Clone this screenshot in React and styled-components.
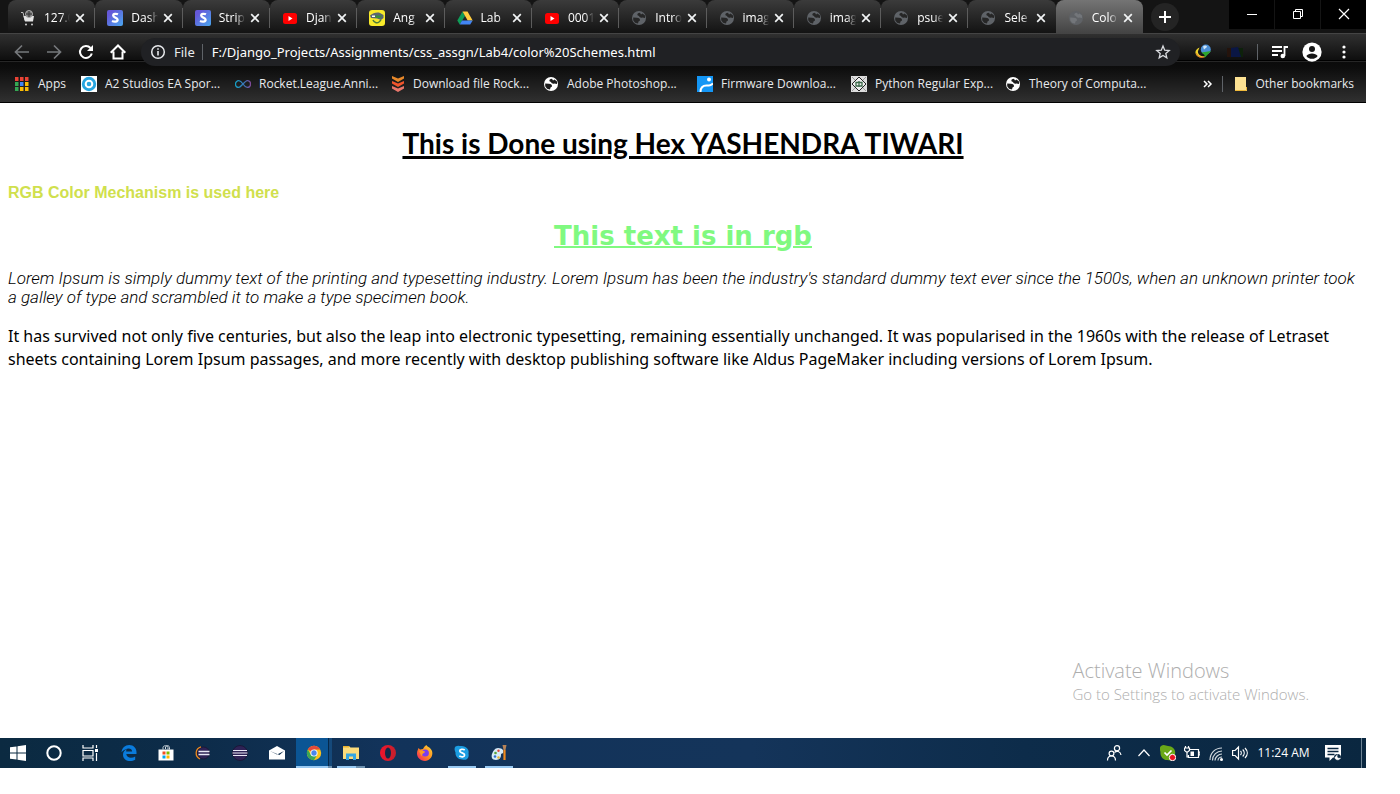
import React from 'react';
import styled, { createGlobalStyle, css } from 'styled-components';

const ui = '"Open Sans", "Noto Sans", sans-serif';

const GlobalStyle = createGlobalStyle`
  *, *::before, *::after { box-sizing: border-box; }
  body { margin: 0; background: #fff; font-family: ${ui}; }
  button, input { font: inherit; color: inherit; border: 0; padding: 0; background: none; }
  svg { display: block; flex: none; }
`;

const Desktop = styled.div`
  display: flex;
  flex-direction: column;
  min-height: 100vh;
  padding: 0 34px 26px 0;
`;

/* ---------- tab strip ---------- */
const TabStrip = styled.header`
  display: flex;
  height: 33px;
  padding-left: 8px;
  background: #141414;
  color: #fff;
`;
const Tabs = styled.div`
  display: flex;
  flex: 1;
  min-width: 0;
`;
const Tab = styled.div`
  position: relative;
  display: flex;
  flex: 1 1 0;
  min-width: 0;
  align-items: center;
  padding: 2px 7px 0 12px;
  border-radius: 8px 8px 0 0;
  background: linear-gradient(#3b3b3b, #131313);
  font-size: 12px;
  line-height: 16px;
  &:not(:last-child)::after {
    content: '';
    position: absolute;
    right: 0;
    top: 8px;
    width: 1px;
    height: 20px;
    background: #5c5c5c;
  }
  &:nth-last-child(2)::after { display: none; }
  ${(p) => p.$active && css`background: linear-gradient(#747474, #444);`}
`;
const TabTitle = styled.span`
  flex: 1;
  min-width: 0;
  margin: 0 2px 0 8px;
  overflow: hidden;
  white-space: nowrap;
  mask-image: linear-gradient(90deg, #000 65%, transparent);
`;
const TabClose = styled.button`
  display: grid;
  place-items: center;
  flex: none;
  width: 16px;
  height: 16px;
`;
const NewTab = styled.button`
  display: grid;
  place-items: center;
  width: 28px;
  height: 28px;
  margin: 3px 50px 0 8px;
  border-radius: 50%;
  background: #242424;
`;
const WindowButtons = styled.div`
  display: flex;
  gap: 1px;
  height: 29px;
  background: #141414;
`;
const WindowButton = styled.button`
  display: grid;
  place-items: center;
  width: 45px;
  background: #000;
`;

/* ---------- toolbar and bookmarks ---------- */
const Chrome = styled.div`
  border-top: 1px solid #444;
  border-bottom: 1px solid #000;
  background: linear-gradient(#303030 0, #0e0e0e 26px, #000 26px, #000 27px, #262626 27px, #262626 28px, #0b0b0b 28px, #0d0d0d 34px, #303030);
  color: #fff;
`;
const Toolbar = styled.div`
  display: flex;
  align-items: center;
  height: 36px;
  padding: 0 6px;
`;
const ToolButton = styled.button`
  display: grid;
  place-items: center;
  flex: none;
  width: 32px;
  height: 28px;
`;
const Omnibox = styled.div`
  display: flex;
  flex: 1;
  align-items: center;
  height: 28px;
  margin: 0 7px;
  padding: 0 9px;
  border-radius: 14px;
  background: #202124;
  font-family: "Noto Sans", sans-serif;
  font-size: 13px;
  line-height: 20px;
`;
const Scheme = styled.label`
  padding: 0 7px 0 8px;
  color: #e8eaed;
`;
const Rule = styled.span`
  flex: none;
  width: 1px;
  height: 16px;
  margin: ${(p) => p.$space || '0 6px'};
  background: #5f6368;
`;
const Address = styled.input`
  flex: 1;
  min-width: 0;
  margin-left: 9px;
  outline: 0;
`;
const StarButton = styled.button`
  display: grid;
  place-items: center;
  width: 16px;
  height: 20px;
`;
const Bookmarks = styled.nav`
  display: flex;
  align-items: center;
  height: 32px;
  padding: 0 12px 4px 14px;
  font-size: 12px;
  line-height: 16px;
`;
const Bookmark = styled.a`
  display: flex;
  flex: none;
  align-items: center;
  gap: ${(p) => p.$gap || '8px'};
  width: ${(p) => p.$width || '154px'};
  color: #e8eaed;
  text-decoration: none;
  white-space: nowrap;
`;
const More = styled.button`
  width: 12px;
  margin-left: auto;
  display: grid;
  place-items: center;
`;

/* ---------- document ---------- */
const Page = styled.main`
  position: relative;
  display: flex;
  flex: 1;
  flex-direction: column;
  gap: 18px;
  padding: 18px 8px;
  color: #000;
`;
const Title = styled.h1`
  margin: 0;
  font: bold 28px/44px Lato, sans-serif;
  text-align: center;
  text-decoration: underline;
  text-decoration-thickness: 3px;
`;
const Note = styled.p`
  margin: 0;
  color: #d0e04d;
  font: bold 16px/20px "Liberation Sans", Arial, sans-serif;
`;
const Subtitle = styled.h2`
  margin: 0;
  color: #80f980;
  font: bold 26px/30px "DejaVu Sans", sans-serif;
  text-align: center;
  text-decoration: underline;
  text-decoration-thickness: 2px;
`;
const Slanted = styled.p`
  margin: 0;
  font: italic 300 17px/19px Roboto, sans-serif;
`;
const Casual = styled.p`
  margin: 0;
  font: 16px/23px "Noto Sans", sans-serif;
`;
const Activation = styled.aside`
  position: absolute;
  right: 57px;
  bottom: 34px;
  color: #aeaeae;
  font-size: 15px;
  font-weight: 300;
  line-height: 20px;
`;
const ActivationTitle = styled.div`
  font-size: 20px;
  line-height: 26px;
`;

/* ---------- taskbar ---------- */
const Taskbar = styled.footer`
  display: flex;
  height: 30px;
  background: linear-gradient(90deg, #0b2a41 0, #0d2c4a 15%, #12335a 28%, #14345a 55%, #0d2c4a 75%, #0a2740);
  color: #fff;
`;
const TaskGroup = styled.div`
  display: flex;
  gap: ${(p) => p.$gap || '0'};
  margin-right: ${(p) => p.$after || '0'};
`;
const TaskButton = styled.button`
  position: relative;
  display: grid;
  place-items: center;
  width: 36px;
  height: 30px;
  ${(p) => p.$active && css`background: linear-gradient(90deg, #0b5594 32px, #06294a 32px, #06294a 33px, #15497a 33px);`}
  ${(p) => p.$line && css`
    &::after {
      content: '';
      position: absolute;
      left: ${p.$active ? '0' : '4px'};
      right: ${p.$active ? '0' : '4px'};
      bottom: 0;
      height: 2px;
      background: linear-gradient(90deg, #98c9f2 ${p.$line}, #6d91b0 ${p.$line});
    }
  `}
`;
const Tray = styled.div`
  display: flex;
  align-items: center;
  margin-left: auto;
`;
const TrayButton = styled.button`
  display: grid;
  place-items: center;
  width: ${(p) => p.$width || '24px'};
  height: 30px;
`;
const Clock = styled.time`
  width: 63px;
  font-size: 12px;
  line-height: 30px;
  text-align: center;
  white-space: nowrap;
`;
const ShowDesktop = styled.button`
  width: 5px;
  height: 30px;
  margin-left: 10px;
  border-left: 1px solid #6d8394;
`;

/* ---------- icons ---------- */
const Svg = ({ s = 16, children, ...rest }) => (
  <svg width={s} height={s} viewBox="0 0 16 16" fill="none" aria-hidden="true" {...rest}>{children}</svg>
);
const Globe = ({ bg = '#5f6368', fg = '#262626' }) => (
  <Svg>
    <circle cx="8" cy="8" r="7" fill={bg} />
    <path d="M9 2.800C7 2.800 6 4 6.500 5.200L8 6c.500 1.500 2 2 3.500 1.500L14 8V5.500l-2.500-2L10 4.500z" fill={fg} />
    <path d="M2.200 7.500 6 7.800c2 .200 3.200 1 3 2.700l-1.500 1-.500 2-3-.800-1.800-2.500z" fill={fg} />
  </Svg>
);
const Cart = () => (
  <Svg>
    <path d="M1 2.500h2l2 8h8" stroke="#bbb" />
    <path d="M3.500 6h10.500l-1 5.500H5z" fill="#e4e4e4" />
    <circle cx="9" cy="4" r="3.500" fill="#777" stroke="#aaa" />
    <path d="M6 4h6M9 1v6" stroke="#333" />
    <circle cx="6" cy="14.500" r="1" fill="#ccc" /><circle cx="12" cy="14.500" r="1" fill="#ccc" />
  </Svg>
);
const Stripe = () => (
  <Svg>
    <defs><linearGradient id="st" x1="0" y1="0" x2="1" y2="1"><stop offset=".2" stopColor="#6558d8" /><stop offset="1" stopColor="#4aa8f0" /></linearGradient></defs>
    <rect width="16" height="16" rx="2" fill="url(#st)" />
    <path d="M11 4.300C9.500 3.600 6.200 3.300 6.200 5.500c0 2.500 4.400 1.800 4.400 4.300 0 2.400-3.600 2.200-5.600 1.200" stroke="#fff" strokeWidth="2.300" />
  </Svg>
);
const YouTube = () => (
  <Svg><rect x="1" y="3" width="14" height="11" rx="2.500" fill="#f00" /><path d="m6.500 6 4 2.500-4 2.500z" fill="#fff" /></Svg>
);
const Angry = () => (
  <Svg>
    <rect width="16" height="16" rx="3" fill="#f8ea2a" />
    <path d="M1 5.500C4 3 8 2 11 3l3.500 2v3l-2.500 2-4-1.500-6-.500z" fill="#5b6770" /><path d="M6 5.500h7l-2 2.500H7z" fill="#3a8f3a" />
    <path d="M4 10c1 2.500 4 3.500 6 2l2-2" stroke="#4c7a3a" strokeWidth="1.500" /><path d="M3 5.500h3v1.500H3z" fill="#fff" />
  </Svg>
);
const Drive = () => (
  <Svg>
    <path d="M5.500 1.500 8 6 2.700 14.500.300 10.500z" fill="#0f9d58" /><path d="M5.500 1.500h5l5.200 9h-5z" fill="#ffcd40" /><path d="M5 10.500h10.700l-2.500 4H2.700z" fill="#4285f4" />
  </Svg>
);
const Close = () => <Svg s={10} viewBox="0 0 10 10"><path d="m1.200 1.200 7.600 7.600m0-7.600-7.600 7.600" stroke="#f1f3f4" strokeWidth="1.700" /></Svg>;
const S1 = { stroke: 'currentColor', strokeWidth: 2 };

const AppsGrid = () => {
  const c = ['#ea4335', '#ea4335', '#ea4335', '#34a853', '#4285f4', '#fbbc04', '#34a853', '#fbbc04', '#fbbc04'];
  return <Svg>{c.map((f, i) => <rect key={i} x={1 + (i % 3) * 5} y={1 + Math.floor(i / 3) * 5} width="3.500" height="4" fill={f} />)}</Svg>;
};
const A2 = () => <Svg><rect width="16" height="16" fill="#fff" /><circle cx="8" cy="8" r="7.200" fill="#27a5e0" /><circle cx="8" cy="8" r="3.300" stroke="#fff" strokeWidth="2" /></Svg>;
const Infinity8 = () => (
  <Svg>
    <defs><linearGradient id="inf"><stop stopColor="#159fc4" /><stop offset=".6" stopColor="#3d74b8" /><stop offset="1" stopColor="#804a9a" /></linearGradient></defs>
    <path d="M8 8C6 5 4.800 4.700 3.800 4.700a3.200 3.200 0 0 0 0 6.600C6 11.300 10 4.700 12.200 4.700a3.200 3.200 0 0 1 0 6.600C11.200 11.300 10 11 8 8z" stroke="url(#inf)" strokeWidth="1.300" />
  </Svg>
);
const Chevrons = () => (
  <Svg>
    <path d="m3 0 6 2.500L15 0v2.500L9 6 3 2.500z" fill="#e8882a" /><path d="m3 5 6 2.500L15 5v2.500L9 11 3 7.500z" fill="#f2552c" /><path d="m3 10 6 2.500 6-2.500v2.500L9 16l-6-3.500z" fill="#e9776c" />
  </Svg>
);
const Firmware = () => <Svg><rect width="16" height="16" fill="#1496f5" /><path d="M3.500 16c0-4.500 2.500-6.500 6-6.500H12c2 0 3-1 4-2" stroke="#fff" strokeWidth="2" /><circle cx="12" cy="3.500" r="2" fill="#fff" /></Svg>;
const Python = () => <Svg><rect width="16" height="16" fill="#ddd" /><path d="m8 1 7 7-7 7-7-7z" fill="#eee" stroke="#222" /><path d="M5 6.500h6v3.500H5zM8 5v6" stroke="#3c6a4a" strokeWidth="1.300" /><path d="m1 1 3 3M15 1l-3 3M1 15l3-3M15 15l-3-3" stroke="#999" /></Svg>;

const Idm = () => (
  <Svg>
    <circle cx="10.800" cy="5.500" r="5" fill="#4c8fd6" /><path d="M8 2.500c2-2 4-1 4 .500L9 5.500z" fill="#cfe6f9" />
    <path d="M4.500 3.500C-1 5.500-1 12 5 13.500c3 .500 5-.500 6-1.500-5 1-8.500-1.500-8-5z" fill="#f0d62c" />
    <path d="M1.500 9.500c1 3.500 5 4.500 8 3.500" stroke="#d9572b" /><path d="M6.500 8.500 16 7l-6.500 7v-3z" fill="#2da52d" />
  </Svg>
);
const DarkExt = () => <Svg><path d="M0 4h5v9H0z" fill="#24130c" /><path d="M11 4h5v9h-5z" fill="#0d210b" /><path d="m4 4 7-1 3 10H4z" fill="#0a1644" /></Svg>;

const Win = () => <Svg><path d="M0 2.300 6.500 1.400v6.100H0zM7.500 1.200 16 0v7.500H7.500zM0 8.500h6.500v6.100L0 13.700zM7.500 8.500H16V16l-8.500-1.200z" fill="#fff" /></Svg>;
const TaskView = () => (
  <Svg><path d="M1 0v3h10V0M1 16v-3h10v3M1 5.500h10v5.500H1zM14.500 0v3M14.500 8v8" stroke="#fff" strokeWidth="1.200" /><path d="M13 4h3v3h-3z" fill="#fff" /></Svg>
);
const Edge = () => <Svg><path d="M.500 7.200C1 3 4 0 8.200 0c4.600 0 7.300 3.400 7.300 7v2H5.300c.200 4 5.500 4.600 8.900 2.400v3.300C9.500 17.300 2 16 2 9.700 2 6.800 3.700 5 5.800 4 5.300 4.700 5.200 6 5.200 6.500h5.900C11 2.500 5 2.400.500 7.200z" fill="#0a7bdc" /></Svg>;
const Store = () => (
  <Svg><path d="M.500 4.500h15V15.500H.500z" fill="#fff" /><path d="M5 4.500V2.500c0-2.300 5-2.300 5 0v2M7.500 4V2c1-2 4-1.500 4 .500v2" stroke="#cfd8df" />
    <path d="M4.500 6.500h3v3h-3z" fill="#f25022" /><path d="M8.500 6.500h3v3h-3z" fill="#7fba00" /><path d="M4.500 10.500h3v3h-3z" fill="#00a4ef" /><path d="M8.500 10.500h3v3h-3z" fill="#ffb900" /></Svg>
);
const Eclipse = ({ ring }) => (
  <Svg>
    <circle cx={ring ? 8.5 : 8} cy="8" r={ring ? 6 : 7.5} fill="#2e2255" stroke="#1a1838" />
    {ring && <path d="M6 1.800A6.500 6.500 0 0 0 5 14" stroke="#f08a1d" strokeWidth="1.300" />}
    <path d={ring ? 'M3.5 6.500h11M3.5 9.500h11' : 'M1 5.500h14M.5 8h15M1 10.500h14'} stroke="#e8e6f4" strokeWidth={ring ? 1.6 : 1} />
  </Svg>
);
const Mail = () => <Svg><path d="m0 5.500 8-4.500 8 4.500v9H0z" fill="#fff" /><path d="m1 6 7 3.500L15 6l-4.500 4z" fill="#12304e" /></Svg>;
const ChromeLogo = () => (
  <Svg>
    <circle cx="8" cy="8" r="7.200" fill="#fbc11b" />
    <path d="M8 8 1.800 4.400A7.200 7.200 0 0 1 14.200 4.400H8z" fill="#e24a3b" /><path d="M1.800 4.400A7.200 7.200 0 0 0 8 15.200L11 10 8 8 4.900 9.800z" fill="#3aa757" />
    <circle cx="8" cy="8" r="3.600" fill="#fff" /><circle cx="8" cy="8" r="2.700" fill="#4a86ec" />
  </Svg>
);
const Explorer = () => <Svg><path d="M0 1h6l1.500 1.500H16V14H0z" fill="#fbdc7b" /><path d="M0 1h6v1.500H0z" fill="#e8b12f" /><path d="M3 15V8.500h10V15h-3v-3.500H6V15z" fill="#35a6e2" /></Svg>;
const Opera = () => (
  <Svg>
    <defs><linearGradient id="op"><stop stopColor="#f0142c" /><stop offset="1" stopColor="#c2202c" /></linearGradient></defs>
    <circle cx="8" cy="8" r="8" fill="url(#op)" /><ellipse cx="8" cy="8" rx="3" ry="5.500" fill="#10294a" />
  </Svg>
);
const Firefox = () => (
  <Svg>
    <defs><linearGradient id="ff" x1="1" y1="0" x2="0" y2="1"><stop stopColor="#ffdf3a" /><stop offset=".5" stopColor="#ff8a1e" /><stop offset="1" stopColor="#f5156c" /></linearGradient></defs>
    <path d="M1.500 3 3 4.500 6 4c.500-1.500 2-3 3.500-4 .500 2 4 2 5.500 6 1.500 5-2 10-7 10S0 12 0 8.500C0 6 1 5 1.500 3z" fill="url(#ff)" />
    <circle cx="8.300" cy="8" r="3.600" fill="#7a3df0" /><path d="M2 6c3-1 4 0 6 .500C8 8 6 8 5.500 9c-.5 1 0 2-1 2z" fill="#ff9b22" />
  </Svg>
);
const Skype = () => (
  <Svg><path d="M1.500 1.500c2.500-1.500 4-.500 6-.500 5 0 8 4 7 7.500.500 2.500 0 4.500-1.500 5.500-2.500 1.500-3.500.500-5 .500-4 0-7-3.500-6.500-7C.500 5 0 3 1.500 1.500z" fill="#1b9de2" />
    <path d="M10.700 5C9 3.800 5.700 4 5.700 6c0 2.300 4.900 1.500 4.900 4 0 2.200-3.400 2.300-5.300.900" stroke="#fff" strokeWidth="1.700" /></Svg>
);
const Paint = () => (
  <Svg><path d="M7 3c5 0 6 3 5 5-1 1-2 0-2 2s-1 5-5 5-5-3-4-6 3-6 6-6z" fill="#d6ebf7" />
    <circle cx="4.500" cy="8" r="1.300" fill="#5aa33c" /><circle cx="7.500" cy="5.800" r="1.200" fill="#e2463b" /><circle cx="4" cy="11.500" r="1.300" fill="#2f6fd0" /><circle cx="7.500" cy="12.500" r="1.200" fill="#e8b12f" />
    <path d="M13.500 5v10" stroke="#f08a1d" strokeWidth="2.200" /><path d="M11.500 0h4l-1 5h-2z" fill="#b78458" /></Svg>
);

const stroke = { stroke: '#fff', strokeWidth: 1.2 };
const People = () => <Svg><circle cx="11" cy="3.300" r="2.600" {...stroke} /><path d="M8.500 7.500c2-2 6-1.500 6.500 2.500" {...stroke} /><circle cx="5.500" cy="8.500" r="2.400" {...stroke} /><path d="M1.500 15.500c0-6 8-6 8 0" {...stroke} /></Svg>;
const Up = () => <Svg s={12} viewBox="0 0 12 12"><path d="m.500 9 5.500-6 5.500 6" {...stroke} /></Svg>;
const SkypeOk = () => <Svg><path d="M1 1c3-2 5 0 7 0 5 0 8 4 7 8 1 3 0 5-2 6-3 1-4 0-6 0-4 0-7-4-6.500-8C0 5-1 3 1 1z" fill="#69a818" /><path d="m4.500 7.500 2.500 2.500L11.500 5.500" stroke="#fff" strokeWidth="1.700" /><circle cx="12.500" cy="12.500" r="3.200" fill="#e81123" stroke="#fff" /></Svg>;
const Battery = () => <Svg><path d="M6 4.500H14.500v8h-10V10M14.500 7H16v3h-1.500M.500 3h5v2.500L3 7.500.500 5.500zM1.500 1v2M4.500 1v2M3 7v5h2" {...stroke} /><path d="M6.500 6.500h3.500v4.500H6.500z" fill="#fff" /></Svg>;
const Wifi = () => <Svg><g transform="translate(2 3)"><path d="M0 12C0 5 5 0 12 0M2.500 12.500C2.500 7 7 3 12 3M5 12.500C5 9 8.500 6 12 6M8 12.500C8 10.500 10 9 12 9" stroke="#d0d8de" strokeWidth="1.200" /><circle cx="11.500" cy="11.500" r="1.500" fill="#fff" /></g></Svg>;
const Volume = () => <Svg><path d="M.600 5.500h2.500L6.500 2v12L3.100 10.500H.600zM8.500 6c1 1 1 3 0 4M10.700 4.500c2 2 2 5 0 7M13 3c3 3 3 7 0 10" {...stroke} /></Svg>;
const Notes = () => <Svg><path d="M0 0h16v12.500H8L4.500 16v-3.500H0z" fill="#fff" /><path d="M2.500 3.500h11M2.500 6.500h11M2.500 9.500h7" stroke="#0a2740" strokeWidth="1.300" /><circle cx="12.500" cy="12.500" r="3.500" fill="#0a2740" /><path d="M12.500 9.500c-1.500 3 1 4.500 3 3.500-1.500 3-6 2-5.500-1" fill="#fff" stroke="#fff" strokeWidth=".6" /></Svg>;

const grey = <Globe />;
const white = <Globe bg="#fff" fg="#1c1c1c" />;
const tabs = [
  ['127.0', <Cart />], ['Dash', <Stripe />], ['Strip', <Stripe />], ['Djan', <YouTube />], ['Ang', <Angry />],
  ['Lab', <Drive />], ['0001', <YouTube />], ['Intro', grey], ['imag', grey], ['imag', grey], ['psue', grey], ['Sele', grey],
  ['Colo', <Globe bg="#5f6266" fg="#73767a" />],
];
const bookmarks = [
  ['A2 Studios EA Spor...', <A2 />], ['Rocket.League.Anni...', <Infinity8 />], ['Download file Rock...', <Chevrons />],
  ['Adobe Photoshop...', white], ['Firmware Downloa...', <Firmware />], ['Python Regular Exp...', <Python />], ['Theory of Computa...', white],
];
const apps = [
  ['Edge', <Edge />], ['Store', <Store />], ['Eclipse', <Eclipse ring />], ['Eclipse IDE', <Eclipse />], ['Mail', <Mail />],
  ['Chrome', <ChromeLogo />, '89%', true], ['File Explorer', <Explorer />, '68%'], ['Opera', <Opera />], ['Firefox', <Firefox />],
  ['Skype', <Skype />, '100%'], ['Paint', <Paint />, '100%'],
];

export default function App() {
  return (
    <Desktop>
      <GlobalStyle />
      <TabStrip>
        <Tabs role="tablist">
          {tabs.map(([title, icon], i) => (
            <Tab key={i} role="tab" aria-selected={i === 12} $active={i === 12}>
              {icon}
              <TabTitle>{title}</TabTitle>
              <TabClose aria-label="Close tab"><Close /></TabClose>
            </Tab>
          ))}
        </Tabs>
        <NewTab aria-label="New tab"><Svg><path d="M8 2v12M2 8h12" {...S1} /></Svg></NewTab>
        <WindowButtons>
          <WindowButton aria-label="Minimize"><Svg><path d="M3 7.500h10" stroke="#fff" /></Svg></WindowButton>
          <WindowButton aria-label="Restore"><Svg><path d="M3.500 4.500h7v7h-7zM5.500 4.500v-2h7v7h-2" stroke="#fff" /></Svg></WindowButton>
          <WindowButton aria-label="Close"><Svg><path d="m3 2 10 10M13 2 3 12" stroke="#fff" strokeWidth="1.200" /></Svg></WindowButton>
        </WindowButtons>
      </TabStrip>

      <Chrome>
        <Toolbar>
          <ToolButton aria-label="Back"><Svg color="#76797c"><path d="M15 8H2M8 1.500 1.500 8 8 14.500" {...S1} strokeWidth="1.700" /></Svg></ToolButton>
          <ToolButton aria-label="Forward"><Svg color="#76797c"><path d="M1 8h13M8 1.500 14.500 8 8 14.500" {...S1} strokeWidth="1.700" /></Svg></ToolButton>
          <ToolButton aria-label="Reload"><Svg><path d="M12.500 4A6 6 0 1 0 13.800 9.500" {...S1} /><path d="M15 1v6H9z" fill="#fff" /></Svg></ToolButton>
          <ToolButton aria-label="Home"><Svg><path d="M.700 8.700 8 1.500l7.300 7.200M3.500 7.500v7h9v-7" {...S1} /></Svg></ToolButton>
          <Omnibox>
            <Svg><circle cx="8" cy="8" r="6.300" stroke="#e8eaed" strokeWidth="1.500" /><path d="M8 7v4.500M8 4.200v1.600" stroke="#e8eaed" strokeWidth="1.600" /></Svg>
            <Scheme htmlFor="address">File</Scheme>
            <Rule $space="0" />
            <Address id="address" type="text" defaultValue="F:/Django_Projects/Assignments/css_assgn/Lab4/color%20Schemes.html" />
            <StarButton aria-label="Bookmark this page"><Svg><path d="m8 2 1.700 4.200 4.500.300-3.400 2.900 1 4.400L8 11.400l-3.800 2.400 1-4.400L1.800 6.500l4.500-.300z" stroke="#dadce0" strokeWidth="1.300" /></Svg></StarButton>
          </Omnibox>
          <ToolButton aria-label="Download manager"><Idm /></ToolButton>
          <ToolButton aria-label="Extension"><DarkExt /></ToolButton>
          <Rule />
          <ToolButton aria-label="Media controls"><Svg><path d="M0 3h10M0 7h10M0 11h6M16 3h-3.500v9" stroke="#fff" strokeWidth="1.800" /><circle cx="10.800" cy="12" r="2.300" fill="#fff" /></Svg></ToolButton>
          <ToolButton aria-label="Profile"><Svg s={20}><circle cx="8" cy="8" r="7.700" fill="#fff" /><circle cx="8" cy="5.500" r="2.400" fill="#161616" /><path d="M3.500 11.200c1.500-2.800 7.500-2.800 9 0-1.500 3-7.500 3-9 0z" fill="#161616" /></Svg></ToolButton>
          <ToolButton aria-label="Menu"><Svg><circle cx="8" cy="3" r="1.600" fill="#fff" /><circle cx="8" cy="8" r="1.600" fill="#fff" /><circle cx="8" cy="13" r="1.600" fill="#fff" /></Svg></ToolButton>
        </Toolbar>
        <Bookmarks>
          <Bookmark href="#" $width="67px"><AppsGrid />Apps</Bookmark>
          {bookmarks.map(([name, icon]) => <Bookmark key={name} href="#">{icon}{name}</Bookmark>)}
          <More aria-label="More bookmarks"><Svg s={10} viewBox="0 0 10 10"><path d="m1 2 3 3-3 3m4-6 3 3-3 3" stroke="#fff" strokeWidth="1.500" /></Svg></More>
          <Rule $space="0 10px 0 8px" />
          <Bookmark href="#" $width="auto" $gap="6px"><Svg><path d="M2 1h11v10l1 1v3H2z" fill="#fde293" /><path d="M2 14.500h11.500V11" stroke="#f0b93a" /></Svg>Other bookmarks</Bookmark>
        </Bookmarks>
      </Chrome>

      <Page>
        <Title>This is Done using Hex YASHENDRA TIWARI</Title>
        <Note>RGB Color Mechanism is used here</Note>
        <Subtitle>This text is in rgb</Subtitle>
        <Slanted>
          Lorem Ipsum is simply dummy text of the printing and typesetting industry. Lorem Ipsum has been the industry's standard dummy text ever since the 1500s, when an unknown printer took a galley of type and scrambled it to make a type specimen book.
        </Slanted>
        <Casual>
          It has survived not only five centuries, but also the leap into electronic typesetting, remaining essentially unchanged. It was popularised in the 1960s with the release of Letraset sheets containing Lorem Ipsum passages, and more recently with desktop publishing software like Aldus PageMaker including versions of Lorem Ipsum.
        </Casual>
        <Activation>
          <ActivationTitle>Activate Windows</ActivationTitle>
          Go to Settings to activate Windows.
        </Activation>
      </Page>

      <Taskbar>
        <TaskGroup $after="3px">
          <TaskButton aria-label="Start"><Win /></TaskButton>
          <TaskButton aria-label="Cortana"><Svg><circle cx="8" cy="8" r="6.700" stroke="#fff" strokeWidth="2" /></Svg></TaskButton>
          <TaskButton aria-label="Task view"><TaskView /></TaskButton>
        </TaskGroup>
        <TaskGroup $gap="1px">
          {apps.map(([name, icon, line, active]) => (
            <TaskButton key={name} aria-label={name} $line={line} $active={active}>{icon}</TaskButton>
          ))}
        </TaskGroup>
        <Tray>
          <TrayButton $width="36px" aria-label="People"><People /></TrayButton>
          <TrayButton aria-label="Show hidden icons"><Up /></TrayButton>
          <TrayButton aria-label="Skype status"><SkypeOk /></TrayButton>
          <TrayButton aria-label="Battery"><Battery /></TrayButton>
          <TrayButton aria-label="Network"><Wifi /></TrayButton>
          <TrayButton aria-label="Volume"><Volume /></TrayButton>
          <Clock>11:24 AM</Clock>
          <TrayButton $width="36px" aria-label="Notifications"><Notes /></TrayButton>
          <ShowDesktop aria-label="Show desktop" />
        </Tray>
      </Taskbar>
    </Desktop>
  );
}
